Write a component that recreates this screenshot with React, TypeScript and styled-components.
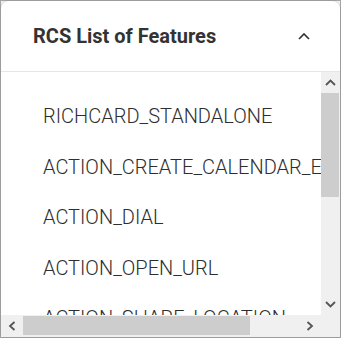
import React from "react";
import styled, { createGlobalStyle } from "styled-components";

const Global = createGlobalStyle`
  html, body { margin: 0; padding: 0; background: #ffffff; }
  body { font-family: Roboto, "Noto Sans", Arial, sans-serif; }
  * { box-sizing: border-box; }
`;

const Frame = styled.div`
  width: 341px;
  height: 338px;
  border: 1px solid #a6a6a6;
  background: #f2f2f2;
`;

const Card = styled.section`
  height: 100%;
  display: flex;
  flex-direction: column;
  background: #ffffff;
  border-radius: 8px 8px 0 0;
  box-shadow: 0 0 2px rgba(0, 0, 0, 0.22);
  overflow: hidden;
`;

const Header = styled.header`
  flex: 0 0 71px;
  display: flex;
  align-items: center;
  justify-content: space-between;
  padding: 0 30px 0 32px;
  border-bottom: 1px solid #e6e6e6;
`;

const Title = styled.h2`
  margin: 0;
  font-family: Roboto, Arial, sans-serif;
  font-weight: 700;
  font-size: 20px;
  color: #333333;
`;

const Toggle = styled.button`
  border: 0;
  background: none;
  padding: 0;
  width: 12px;
  height: 12px;
  display: flex;
  align-items: center;
  justify-content: center;
`;

const ScrollArea = styled.div`
  flex: 1 1 auto;
  min-height: 0;
  display: grid;
  grid-template-columns: 1fr 19px;
  grid-template-rows: 1fr 22px;
  background: #f0f0f0;
`;

const Viewport = styled.div`
  overflow: hidden;
  background: #ffffff;
  min-height: 0;
  min-width: 0;
`;

const Bar = styled.div<{ $vertical?: boolean }>`
  display: flex;
  flex-direction: ${(p) => (p.$vertical ? "column" : "row")};
  background: #f0f0f0;
`;

const BarButton = styled.div<{ $vertical?: boolean }>`
  flex: 0 0 ${(p) => (p.$vertical ? "21px" : "22px")};
  display: flex;
  align-items: center;
  justify-content: center;
`;

const Track = styled.div<{ $vertical?: boolean }>`
  flex: 1 1 auto;
  display: flex;
  flex-direction: ${(p) => (p.$vertical ? "column" : "row")};
  padding: ${(p) => (p.$vertical ? "0 1px 0 0" : "0")};
`;

const Thumb = styled.div<{ $vertical?: boolean }>`
  background: #cdcdcd;
  flex: 0 0 ${(p) => (p.$vertical ? "104px" : "227px")};
  ${(p) => (p.$vertical ? "" : "margin: 1px 0 2px;")}
`;

const Corner = styled.div`
  background: #f0f0f0;
`;

const List = styled.ul`
  list-style: none;
  margin: 0;
  padding: 19px 24px 52px 42px;
  width: max-content;
`;

const Item = styled.li`
  font-family: Roboto, Arial, sans-serif;
  font-size: 20px;
  font-weight: 300;
  color: #2e2e2e;
  line-height: 20.5px;
  padding: 15px 0;
  white-space: nowrap;
`;

const Chevron = ({ d, w = 10, h = 10 }: { d: string; w?: number; h?: number }) => (
  <svg width={w} height={h} viewBox={`0 0 ${w} ${h}`}>
    <path d={d} fill="none" stroke="#555555" strokeWidth="1.8" />
  </svg>
);

const features = [
  "RICHCARD_STANDALONE",
  "ACTION_CREATE_CALENDAR_EVENT",
  "ACTION_DIAL",
  "ACTION_OPEN_URL",
  "ACTION_SHARE_LOCATION",
  "ACTION_VIEW_LOCATION",
  "RICHCARD_CAROUSEL",
  "ACTION_OPEN_URL_IN_WEBVIEW",
];

export default function App() {
  return (
    <>
      <Global />
      <Frame>
        <Card>
          <Header>
            <Title>RCS List of Features</Title>
            <Toggle aria-label="Collapse">
              <svg width="12" height="8" viewBox="0 0 12 8">
                <path d="M1 7 L6 2 L11 7" fill="none" stroke="#333" strokeWidth="1.6" />
              </svg>
            </Toggle>
          </Header>
          <ScrollArea>
            <Viewport>
              <List>
                {features.map((f) => (
                  <Item key={f}>{f}</Item>
                ))}
              </List>
            </Viewport>
            <Bar $vertical>
              <BarButton $vertical>
                <Chevron w={11} h={7} d="M1 6 L5.5 1.5 L10 6" />
              </BarButton>
              <Track $vertical>
                <Thumb $vertical />
              </Track>
              <BarButton $vertical>
                <Chevron w={11} h={7} d="M1 1 L5.5 5.5 L10 1" />
              </BarButton>
            </Bar>
            <Bar>
              <BarButton>
                <Chevron w={8} h={10} d="M6.5 1 L2 5 L6.5 9" />
              </BarButton>
              <Track>
                <Thumb />
              </Track>
              <BarButton>
                <Chevron w={8} h={10} d="M1.5 1 L6 5 L1.5 9" />
              </BarButton>
            </Bar>
            <Corner />
          </ScrollArea>
        </Card>
      </Frame>
    </>
  );
}
